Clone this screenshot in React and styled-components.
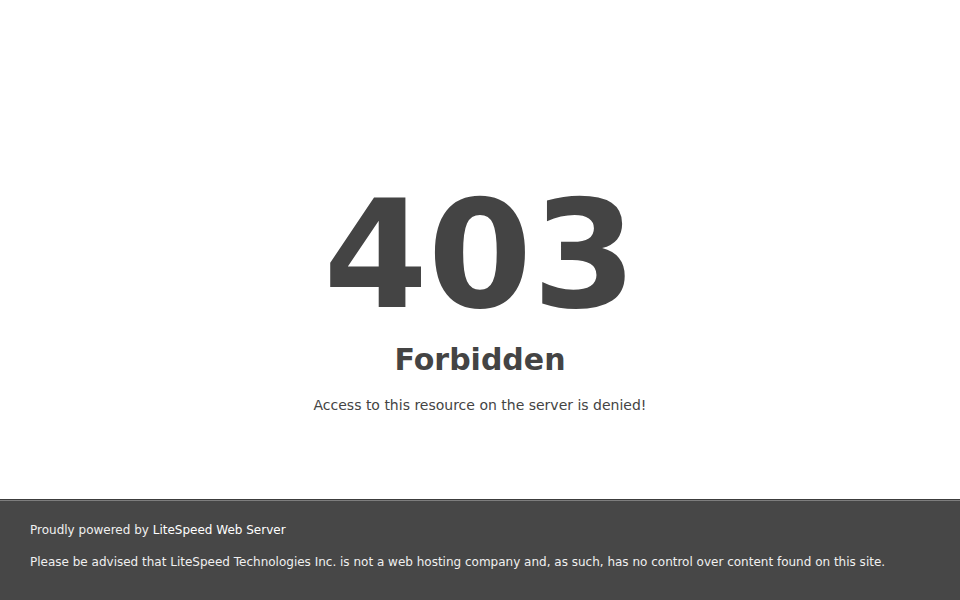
import React from "react";
import styled, { createGlobalStyle } from "styled-components";

const GlobalStyle = createGlobalStyle`
  html, body, #root {
    height: 100%;
  }
  body {
    margin: 0;
    color: #444;
    background-color: #fff;
    font: normal 14px/20px "DejaVu Sans", Verdana, sans-serif;
  }
`;

const Page = styled.div`
  display: flex;
  flex-direction: column;
  min-height: 100%;
`;

const Main = styled.div`
  flex: 1;
  padding-top: 30vh;
  text-align: center;
`;

const Code = styled.h1`
  margin: 0;
  font-size: 150px;
  line-height: 150px;
  font-weight: bold;
`;

const Title = styled.h2`
  margin: 20px 0 0.83em;
  font-size: 30px;
  font-weight: bold;
`;

const Message = styled.p`
  margin: 0;
`;

const Footer = styled.footer`
  height: 100px;
  padding: 20px 30px 0;
  box-sizing: border-box;
  height: 101px;
  color: #f0f0f0;
  font-size: 12px;
  background-color: #474747;
  border-top: 1px solid rgba(0, 0, 0, 0.15);
  box-shadow: 0 1px 0 rgba(255, 255, 255, 0.3) inset;
`;

const ServerLink = styled.a`
  color: #fff;
  text-decoration: none;
`;

const Notice = styled.p`
  margin: 12px 0 0;
`;

export default function App() {
  return (
    <>
      <GlobalStyle />
      <Page>
        <Main>
          <Code>403</Code>
          <Title>Forbidden</Title>
          <Message>Access to this resource on the server is denied!</Message>
        </Main>
        <Footer>
          <div>
            Proudly powered by{" "}
            <ServerLink href="#">LiteSpeed Web Server</ServerLink>
          </div>
          <Notice>
            Please be advised that LiteSpeed Technologies Inc. is not a web
            hosting company and, as such, has no control over content found on
            this site.
          </Notice>
        </Footer>
      </Page>
    </>
  );
}
